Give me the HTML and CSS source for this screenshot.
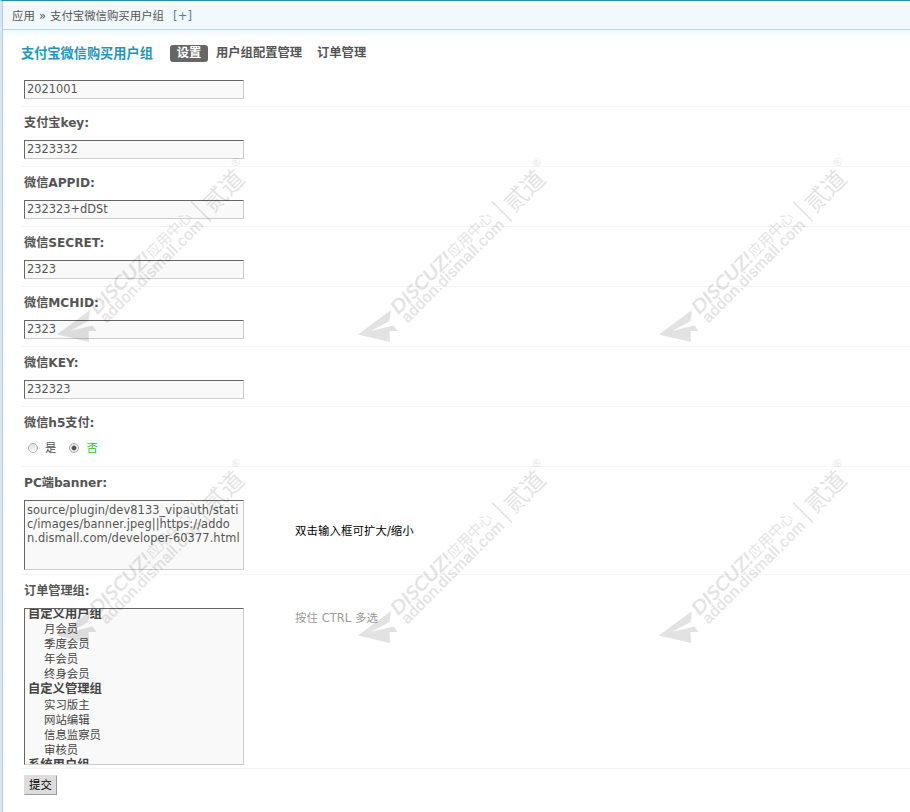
FILE: index.html
```html
<!DOCTYPE html>
<html lang="zh-CN">
<head>
<meta charset="utf-8">
<title>支付宝微信购买用户组</title>
<link rel="stylesheet" href="styles.css">
</head>
<body>
<div class="frame">
  <header class="crumbs"><span class="c-app">应用</span><span class="c-sep">»</span><span class="c-name">支付宝微信购买用户组</span><a class="c-add">[+]</a></header>
  <main>
    <nav class="tabs"><h3>支付宝微信购买用户组</h3><a class="tab on">设置</a><a class="tab t2">用户组配置管理</a><a class="tab">订单管理</a></nav>
    <form>
      <section class="row first"><div class="field">2021001</div></section>
      <section class="row"><label>支付宝key:</label><div class="field">2323332</div></section>
      <section class="row"><label>微信APPID:</label><div class="field">232323+dDSt</div></section>
      <section class="row"><label>微信SECRET:</label><div class="field">2323</div></section>
      <section class="row"><label>微信MCHID:</label><div class="field">2323</div></section>
      <section class="row"><label>微信KEY:</label><div class="field">232323</div></section>
      <section class="row"><label>微信h5支付:</label>
        <div class="radios"><i class="radio"></i><span>是</span><i class="radio checked"></i><span class="green">否</span></div>
      </section>
      <section class="row banner"><label>PC端banner:</label>
        <div class="split"><div class="field area">source/plugin/dev8133_vipauth/stati<br>c/images/banner.jpeg||https://addo<br>n.dismall.com/developer-60377.html</div><p class="tip dark">双击输入框可扩大/缩小</p></div>
      </section>
      <section class="row groups"><label>订单管理组:</label>
        <div class="split">
          <ul class="field list">
            <li class="group">自定义用户组</li><li>月会员</li><li>季度会员</li><li>年会员</li><li>终身会员</li>
            <li class="group">自定义管理组</li><li>实习版主</li><li>网站编辑</li><li>信息监察员</li><li>审核员</li>
            <li class="group">系统用户组</li>
          </ul>
          <p class="tip">按住 CTRL 多选</p>
        </div>
      </section>
      <button class="submit" type="button">提交</button>
    </form>
  </main>
  <svg class="marks" width="910" height="812" viewBox="0 0 910 812" aria-hidden="true">
    <defs>
      <g id="mark">
        <path d="M0 0 33-24.500 31.500-13.500 13-3.500 35.500-9 39.500-3.500 31.500-3.500 32 7.500Z"/>
        <g transform="translate(40 -19.500) rotate(-45)">
          <text class="brand" x="0" y="0" textLength="78" lengthAdjust="spacingAndGlyphs">DISCUZ!</text>
          <text class="center" x="79" y="-1" textLength="57" lengthAdjust="spacingAndGlyphs">应用中心</text>
        </g>
        <text class="site" transform="translate(49.500 -11) rotate(-45)" textLength="138" lengthAdjust="spacing">addon.dismall.com</text>
        <path class="bar" d="M134-133 154-113"/>
        <text class="name" transform="translate(156 -121) rotate(-45)" textLength="47" lengthAdjust="spacingAndGlyphs">贰道</text>
        <text class="reg" transform="translate(178.500 -167) rotate(-45)">®</text>
      </g>
    </defs>
    <use href="#mark" x="57" y="334.500"/><use href="#mark" x="358" y="334.500"/><use href="#mark" x="659" y="334.500"/>
    <use href="#mark" x="57" y="635.500"/><use href="#mark" x="358" y="635.500"/><use href="#mark" x="659" y="635.500"/>
  </svg>
</div>
</body>
</html>
```
FILE: styles.css
```css
* { box-sizing: border-box; }
body {
  margin: 0;
  background: #fff;
  color: #555;
  font: 11.4px/15px "DejaVu Sans", "Noto Sans CJK SC", sans-serif;
}
.frame {
  position: relative;
  height: 812px;
  overflow: hidden;
  border-left: 2px solid #d8e7ef;
  border-top: 1px solid #258eaa;
  box-shadow: inset 1px 0 #b5cfd9;
}
.crumbs {
  display: flex;
  align-items: center;
  height: 29px;
  margin-left: 1px;
  padding: 3px 0 0 9px;
  background: linear-gradient(#fff 3px, #f0f8fb 4px, #f2f9fc);
  border-bottom: 1px solid #b9d8df;
  white-space: nowrap;
}
.c-app { width: 27px; }
.c-sep { width: 11px; }
.c-name { width: 123px; }
.c-add { color: #4a80b5; font-size: 11.4px; letter-spacing: .3px; }
main {
  padding: 14px 0 0 18px;
  margin-left: 1px;
  background: linear-gradient(#edf7fa, #fff 7px);
}
.tabs {
  display: flex;
  align-items: center;
  height: 19px;
  font-weight: bold;
  font-size: 12.3px;
  white-space: nowrap;
}
h3 { margin: 0; width: 149px; font-size: 13.2px; color: #1d97bc; }
.on {
  width: 38px;
  height: 17px;
  line-height: 17px;
  margin-right: 8px;
  text-align: center;
  border-radius: 3px;
  background: #666;
  color: #fff;
}
.t2 { width: 101px; }
form { margin-left: -1px; }
.row {
  height: 60px;
  border-bottom: 1px solid #f4f4f4;
  padding-left: 4px;
}
.first { height: 44px; padding-top: 17px; }
label {
  display: block;
  height: 33px;
  padding-top: 8px;
  font-size: 12.2px;
  line-height: 16px;
  font-weight: bold;
  letter-spacing: -.05px;
}
.field {
  width: 220px;
  height: 19px;
  padding: 0 2px;
  line-height: 17px;
  border: 1px solid #ccc;
  border-top-color: #666;
  border-left-color: #666;
  background: #f9f9f9;
  white-space: nowrap;
  overflow: hidden;
}
.radios { display: flex; align-items: center; padding-left: 4px; height: 16px; }
.radio {
  width: 10px;
  height: 10px;
  border: 1px solid #b0b0b0;
  border-radius: 50%;
  background: linear-gradient(#ddd, #fff);
}
.checked { background: radial-gradient(circle, #555 0 1.800px, #e6e6e6 2.800px); }
.radios span { margin: 0 13px 0 7px; }
.radios .green { color: #1fc51f; }
.banner { height: 108px; }
.split { display: flex; }
.tip { margin: 0 0 0 51px; color: #999; white-space: nowrap; }
.banner .tip { padding-top: 24px; color: #000; letter-spacing: .1px; }
.area { height: 70px; padding-top: 2px; line-height: 14px; letter-spacing: .09px; }
.groups { height: 194px; }
.list {
  height: 157px;
  margin: 0;
  padding: 0 3px;
  list-style: none;
  line-height: 15.200px;
  color: #444;
}
.list li { height: 15.200px; padding-left: 16px; }
.list .group { padding: 0; font-size: 12.300px; font-weight: bold; }
.list li:first-child { margin-top: -2.500px; }
.groups .tip { padding-top: 3px; letter-spacing: .1px; }
.submit {
  display: block;
  width: 33px;
  height: 20px;
  margin: 6px 0 0 4px;
  padding: 1px 0 0;
  border: 1px solid #999;
  border-top-color: #ddd;
  border-left-color: #ddd;
  background: #ddd;
  color: #000;
  font: inherit;
}
.marks {
  position: absolute;
  left: -2px;
  top: -1px;
  fill: #000;
  opacity: .11;
  pointer-events: none;
}
.marks text { font-family: "Liberation Sans", "Noto Sans CJK SC", sans-serif; }
.marks .brand { font: italic 18px Lato, sans-serif; stroke: #000; stroke-width: .5px; }
.marks .center { font-size: 14.500px; }
.marks .site { font-size: 15.500px; stroke: #000; stroke-width: .4px; }
.marks .name { font-size: 24px; }
.marks .reg { font-size: 11px; }
.bar { stroke: #000; stroke-width: 1.500px; fill: none; }
```
